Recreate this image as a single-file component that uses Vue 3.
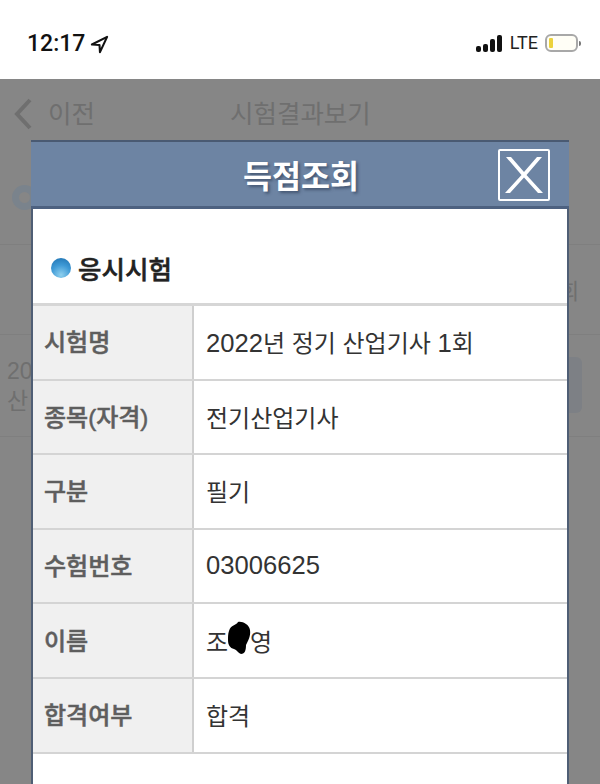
<template>
  <div class="screen">
    <div class="status-bar">
      <div class="time">
        <span>12:17</span>
        <svg class="arrow" width="19" height="19" viewBox="0 0 20 20">
          <path d="M18 2 L2 10 L10 10.500 L10.500 18 Z" fill="none" stroke="#111" stroke-width="2.200" stroke-linejoin="round" />
        </svg>
      </div>
      <div class="status-right">
        <div class="signal">
          <i style="height: 6px"></i>
          <i style="height: 8px"></i>
          <i style="height: 13px"></i>
          <i style="height: 17px"></i>
        </div>
        <span class="lte">LTE</span>
        <div class="battery"><i></i></div>
        <div class="battery-tip"></div>
      </div>
    </div>

    <div class="page">
      <div class="back-layer">
        <div class="top-nav">
          <svg class="chevron" width="20" height="34" viewBox="0 0 20 34">
            <path d="M17 3 L4 17 L17 31" fill="none" stroke="#6f6f6f" stroke-width="4" />
          </svg>
          <span class="prev">이전</span>
          <span class="nav-title">시험결과보기</span>
        </div>
        <div class="back-head">
          <div class="back-dot"></div>
        </div>
        <div class="back-row back-row-head"><span>회</span></div>
        <div class="back-row back-row-body">
          <div class="back-text">20<br />산</div>
          <div class="back-btn"></div>
        </div>
      </div>

      <div class="modal">
        <div class="modal-head">
          <span class="modal-title">득점조회</span>
          <button class="close-btn">
            <svg width="40" height="40" viewBox="0 0 40 40">
              <path d="M2 2 H7 L20 17 L33 2 H38 L22.500 20 L39 38 H34 L20 22.500 L6 38 H1 L17.500 20 Z" fill="#fff" />
            </svg>
          </button>
        </div>
        <div class="section-title">
          <span class="ball"></span>
          <span>응시시험</span>
        </div>
        <div class="info-table">
          <div v-for="row in rows" :key="row.label" class="info-row">
            <div class="info-label">{{ row.label }}</div>
            <div class="info-value">
              <span v-if="row.masked" class="masked-name">조<svg class="scribble" width="24" height="34" viewBox="0 0 24 34"><path d="M2 10 C4 3 9 5 11 1 C15 0 22 3 23 9 C24 15 21 20 19 24 C19 29 18 33 14 33 C11 32 10 29 7 28 C3 27 1 24 1 19 C1 15 1 13 2 10 Z" fill="#000" /></svg>영</span>
              <span v-else>
                <span v-for="(part, i) in splitDigits(row.value)" :key="i" :class="{ num: /\d/.test(part) }">{{ part }}</span>
              </span>
            </div>
          </div>
        </div>
      </div>
    </div>
  </div>
</template>

<script setup>
const rows = [
  { label: '시험명', value: '2022년 정기 산업기사 1회' },
  { label: '종목(자격)', value: '전기산업기사' },
  { label: '구분', value: '필기' },
  { label: '수험번호', value: '03006625' },
  { label: '이름', value: '조영', masked: true },
  { label: '합격여부', value: '합격' }
]

// 숫자만 조금 더 크게 보여서 따로 나눈다
const splitDigits = (text) => text.split(/(\d+)/).filter(Boolean)
</script>

<style>
html,
body {
  margin: 0;
  background: #fff;
}
</style>

<style scoped>
.screen {
  width: 600px;
  height: 784px;
  overflow: hidden;
  font-family: "Liberation Sans", "Noto Sans CJK KR", sans-serif;
}

.status-bar {
  height: 79px;
  box-sizing: border-box;
  padding: 26px 19px 0 27px;
  display: flex;
  justify-content: space-between;
  align-items: flex-start;
  background: #fff;
}

.time {
  display: flex;
  align-items: center;
  gap: 5px;
  font-family: Roboto, "Liberation Sans", sans-serif;
  font-size: 23px;
  font-weight: 500;
  line-height: 36px;
  color: #111;
}

.status-right {
  display: flex;
  align-items: center;
  margin-top: 8px;
}

.signal {
  display: flex;
  align-items: flex-end;
  gap: 2px;
  height: 17px;
}

.signal i {
  width: 5px;
  border-radius: 2px;
  background: #111;
}

.lte {
  margin-left: 8px;
  font-family: Roboto, "Liberation Sans", sans-serif;
  font-size: 18px;
  line-height: 18px;
  color: #222;
}

.battery {
  width: 33px;
  height: 18px;
  box-sizing: border-box;
  margin-left: 7px;
  border: 2px solid #a8a8a8;
  border-radius: 6px;
  padding: 2px;
  background: #fffef6;
}

.battery i {
  display: block;
  width: 4px;
  height: 100%;
  border-radius: 1px;
  background: #ecd23c;
}

.battery-tip {
  width: 2px;
  height: 5px;
  margin-left: 1px;
  background: #777;
  border-radius: 0 2px 2px 0;
}

.page {
  position: relative;
  height: 705px;
  background: #868686;
}

.back-layer {
  color: #6f6f6f;
}

.top-nav {
  position: relative;
  height: 61px;
  box-sizing: border-box;
  padding: 18px 0 0 13px;
  display: flex;
  align-items: flex-start;
}

.prev {
  margin-left: 15px;
  font-size: 25.500px;
  line-height: 34px;
}

.nav-title {
  position: absolute;
  left: 230px;
  top: 18px;
  font-size: 25.500px;
  line-height: 34px;
}

.back-head {
  height: 105px;
  box-sizing: border-box;
  padding: 45px 0 0 12px;
  border-bottom: 1px solid #7f7f7f;
}

.back-dot {
  width: 25px;
  height: 25px;
  box-sizing: border-box;
  border: 7px solid #7a838c;
  border-radius: 50%;
}

.back-row {
  position: relative;
  border-bottom: 1px solid #7f7f7f;
}

.back-row-head {
  height: 89px;
}

.back-row-head span {
  position: absolute;
  left: 559px;
  top: 28px;
  font-size: 22px;
}

.back-row-body {
  height: 101px;
}

.back-text {
  position: absolute;
  left: 7px;
  top: 21px;
  font-size: 23px;
  line-height: 30px;
}

.back-btn {
  position: absolute;
  right: 18px;
  top: 22px;
  width: 30px;
  height: 56px;
  border-radius: 6px;
  background: #7d8085;
}

.modal {
  position: absolute;
  left: 31px;
  top: 61px;
  width: 538px;
  height: 644px;
  box-sizing: border-box;
  background: #fff;
  border-left: 2px solid #4f5e75;
  border-right: 2px solid #4f5e75;
}

.modal-head {
  position: relative;
  height: 69px;
  margin: 0 -2px;
  box-sizing: border-box;
  display: flex;
  justify-content: center;
  align-items: center;
  padding-left: 2px;
  background: #6d84a3;
  border-top: 2px solid #4a5a72;
  border-bottom: 3px solid #4d6180;
}

.modal-title {
  font-size: 31.500px;
  font-weight: 700;
  color: #fff;
  text-shadow: 2px 2px 3px rgba(40, 55, 80, 0.6);
}

.close-btn {
  position: absolute;
  right: 19px;
  top: 7px;
  width: 52px;
  height: 52px;
  box-sizing: border-box;
  padding: 0;
  display: flex;
  align-items: center;
  justify-content: center;
  background: transparent;
  border: 2px solid #fff;
  border-radius: 2px;
}

.section-title {
  height: 94px;
  box-sizing: border-box;
  padding: 41px 0 0 18px;
  display: flex;
  align-items: flex-start;
  gap: 7px;
  font-size: 25.500px;
  font-weight: 500;
  line-height: 40px;
  color: #222;
  -webkit-text-stroke: 0.500px #222;
}

.ball {
  width: 20px;
  height: 20px;
  margin-top: 8px;
  border-radius: 50%;
  background: radial-gradient(circle at 50% 85%, #8fd0ee 0%, #3f9ad6 50%, #1c6fae 100%);
}

.info-table {
  border-top: 3px solid #d6d6d6;
}

.info-row {
  display: flex;
  height: 74.600px;
  box-sizing: border-box;
  border-bottom: 2px solid #d4d4d4;
}

.info-label {
  width: 161px;
  box-sizing: border-box;
  padding: 0 0 3px 11px;
  display: flex;
  align-items: center;
  font-size: 24px;
  font-weight: 500;
  color: #5e5e5e;
  -webkit-text-stroke: 0.500px #5e5e5e;
  background: #f0f0f0;
  border-right: 2px solid #cfcfcf;
}

.info-value {
  flex: 1;
  padding: 0 0 1px 12px;
  display: flex;
  align-items: center;
  font-size: 24px;
  color: #333;
}

.num {
  font-size: 25.600px;
}

.masked-name {
  display: flex;
  align-items: center;
}

.scribble {
  margin: -4px -1px 0 -1px;
}
</style>
